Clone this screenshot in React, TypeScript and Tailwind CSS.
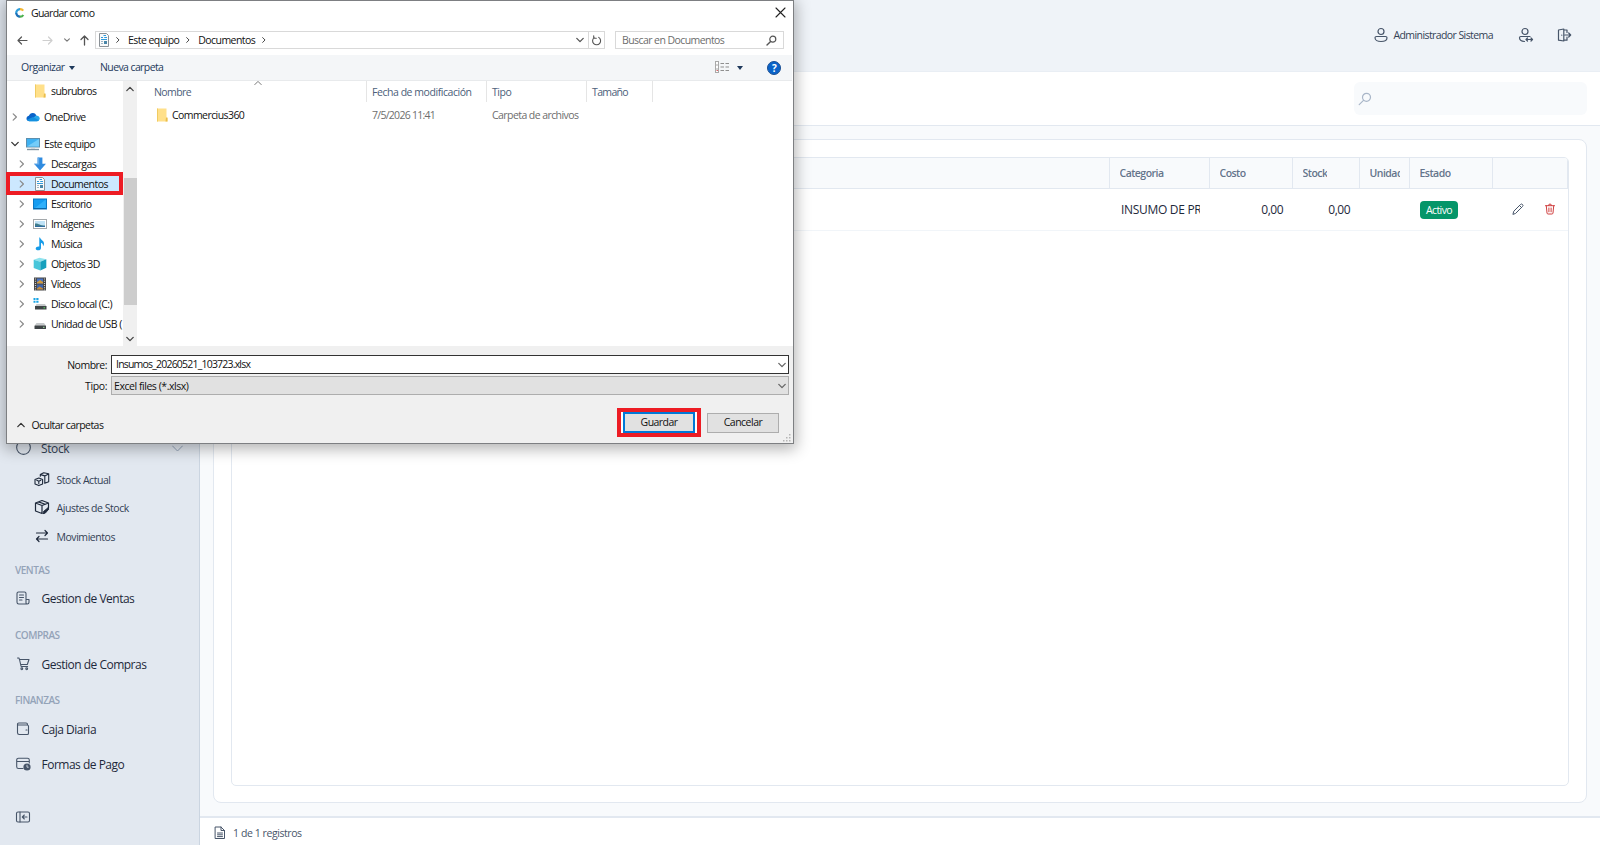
import type { ReactNode } from 'react';
import { clsx } from 'clsx';

interface IconProps {
  className?: string;
  children?: ReactNode;
  size?: number;
  box?: number;
}

// 16 unit stroke icon, shared by the app and the dialog
const Icon = ({ className, children, size = 16, box = 16 }: IconProps) => (
  <svg
    width={size}
    height={size}
    viewBox={`0 0 ${box} ${box}`}
    fill="none"
    stroke="currentColor"
    strokeLinecap="round"
    strokeLinejoin="round"
    className={clsx('shrink-0', className)}
  >
    {children}
  </svg>
);

const ChevronRight = ({ className }: { className?: string }) => (
  <Icon size={8} box={8} className={className}>
    <path d="M2.2 .8 5.4 4 2.2 7.2" strokeWidth="1.2" />
  </Icon>
);

const ChevronDown = ({ className }: { className?: string }) => (
  <Icon size={8} box={8} className={className}>
    <path d="M.8 2.4 4 5.6 7.2 2.4" strokeWidth="1.3" />
  </Icon>
);

const ChevronUp = ({ className }: { className?: string }) => (
  <Icon size={8} box={8} className={className}>
    <path d="M.8 5.6 4 2.4 7.2 5.6" strokeWidth="1.3" />
  </Icon>
);

const FolderIcon = () => (
  <svg width="14" height="14" viewBox="0 0 14 14" className="shrink-0">
    <path d="M2 .5h9.500v9.500h1v3.500H2z" fill="#ffe08a" />
    <path d="M11 9.500h1.500v4H10.500z" fill="#e9bd4c" />
    <path d="M2.500 .5v13" stroke="#f0cb62" />
  </svg>
);

const DocumentIcon = () => (
  <svg width="14" height="14" viewBox="0 0 14 14" className="shrink-0">
    <path d="M2.500 .5h7l2 2v11h-9z" fill="#fafafa" stroke="#8b9196" />
    <path d="M6.500 2.500h2.500M4 4.500h2M7.200 4.500h2.800M4 6.500h6" stroke="#2f9bdc" />
    <path d="M4 8.500h2M4 10.500h2" stroke="#9fb6c6" />
    <rect x="7" y="8" width="3" height="3" fill="#4a86a8" />
  </svg>
);

const treeIcons = {
  folder: <FolderIcon />,
  cloud: (
    <svg width="14" height="14" viewBox="0 0 14 14" className="shrink-0">
      <path d="M3.500 11.200C1.400 11.200 .3 9.800.5 8.200.7 6.800 1.800 6 2.900 5.800 3.500 3.900 5 2.800 6.900 2.900c1.800.1 3 1.200 3.500 2.800z" fill="#0a63c9" />
      <path d="M3.500 11.200 9.900 5.500c2 0 3.800 1 3.800 3.100 0 1.500-1.200 2.600-2.800 2.600z" fill="#28a8ea" />
      <path d="M1 9.800 7 7l6 3.200c-.5.7-1.200 1-2.100 1H3.500C2.300 11.200 1.400 10.700 1 9.800z" fill="#1490df" />
    </svg>
  ),
  pc: (
    <svg width="14" height="14" viewBox="0 0 14 14" className="shrink-0">
      <rect x=".5" y="1.5" width="13" height="8.5" fill="#3fb1f2" stroke="#5c8fae" />
      <path d="M1 9.500 13 2v7.500z" fill="#74ccf9" />
      <path d="M1 12.500h12" stroke="#8093a0" strokeWidth="1.4" />
      <path d="M5 11h4" stroke="#b8c6cf" />
    </svg>
  ),
  download: (
    <svg width="14" height="14" viewBox="0 0 14 14" className="shrink-0">
      <path d="M4.600 .6h4.800v6.200H13L7 13.600 1 6.800h3.600z" fill="#2f8be0" />
      <path d="M4.600 .6h1.600v7H1.800L1 6.800h3.600z" fill="#66abe8" />
    </svg>
  ),
  document: <DocumentIcon />,
  desktop: (
    <svg width="14" height="14" viewBox="0 0 14 14" className="shrink-0">
      <rect x=".5" y="2" width="13" height="10" fill="#159cf0" stroke="#0a78c4" />
      <path d="M2 11 12.800 2.500V11z" fill="#2fb0fa" />
      <path d="M1 11.500h12" stroke="#0a66a8" />
    </svg>
  ),
  image: (
    <svg width="14" height="14" viewBox="0 0 14 14" className="shrink-0">
      <rect x=".5" y="2.5" width="13" height="9" fill="#fff" stroke="#a3a8ab" />
      <rect x="2" y="4" width="10" height="6" fill="#bfe2f6" />
      <path d="M2 6.500c3-.5 5 2 10 2V10H2z" fill="#3f7c8c" />
      <path d="M2 9.200h10v.8H2z" fill="#2b67a5" />
    </svg>
  ),
  music: (
    <svg width="14" height="14" viewBox="0 0 14 14" className="shrink-0">
      <path d="M7 .5c.5 2.500 4.300 3 4 6.500-.1 1-.6 1.800-1 2.200.2-2-.8-3-2-3.400v5.100c0 1.400-1.200 2.400-2.800 2.400S2.600 12.500 2.700 11.400C2.800 10 4.400 9.200 6.300 9.500V.5z" fill="#159be8" />
    </svg>
  ),
  cube: (
    <svg width="14" height="14" viewBox="0 0 14 14" className="shrink-0">
      <path d="M.7 2.800 6.500 .7l6.800 1.600-6 2.400z" fill="#8fe3ee" />
      <path d="M.7 2.800 7.300 4.700v8.700L.7 11z" fill="#48c6da" />
      <path d="M7.300 4.700 13.300 2.300v8.400l-6 2.700z" fill="#16a0bd" />
    </svg>
  ),
  video: (
    <svg width="14" height="14" viewBox="0 0 14 14" className="shrink-0">
      <rect x="1" y=".5" width="12" height="13" fill="#444" />
      <rect x="4" y="1.5" width="6" height="5" fill="#4773c4" />
      <rect x="4" y="7.5" width="6" height="5" fill="#3d64ad" />
      <path d="M4 5.200 7 3l3 2v1.500H4z" fill="#d19a3c" />
      <path d="M4 11.500 6.500 9.500 10 11.500v1H4z" fill="#c78a35" />
      <path d="M2.500 1.500v12M11.500 1.500v12" stroke="#cfcfcf" strokeWidth="1.2" strokeDasharray="1 1.2" />
    </svg>
  ),
  disk: (
    <svg width="14" height="14" viewBox="0 0 14 14" className="shrink-0">
      <path d="M.5 1h2v2h-2zM3.300 1h2.200v2H3.300zM.5 3.700h2v2h-2zM3.300 3.700h2.200v2H3.300z" fill="#19a5e6" />
      <path d="M3.500 7h8.500l1.500 2.500h-11.500z" fill="#c6c9cb" />
      <rect x="2" y="9" width="11.5" height="3.5" fill="#3f4447" />
      <path d="M10.500 10.800h1.500" stroke="#54e05a" />
    </svg>
  ),
  usb: (
    <svg width="14" height="14" viewBox="0 0 14 14" className="shrink-0">
      <path d="M3.500 6h7.500l2 2.800H1.500z" fill="#c6c9cb" />
      <rect x="1.5" y="8.5" width="11.5" height="3.5" rx=".6" fill="#3f4447" />
      <path d="M10 10.300h1.500" stroke="#9fe0a0" />
    </svg>
  ),
};

interface TreeItem {
  label: string;
  icon: keyof typeof treeIcons;
  level: 'root' | 'child';
  arrow?: 'right' | 'down';
  className?: string;
  selected?: boolean;
}

const treeItems: TreeItem[] = [
  { label: 'subrubros', icon: 'folder', level: 'child', className: 'mb-[6px]' },
  { label: 'OneDrive', icon: 'cloud', level: 'root', arrow: 'right', className: 'mb-[7px]' },
  { label: 'Este equipo', icon: 'pc', level: 'root', arrow: 'down' },
  { label: 'Descargas', icon: 'download', level: 'child', arrow: 'right' },
  { label: 'Documentos', icon: 'document', level: 'child', arrow: 'right', selected: true },
  { label: 'Escritorio', icon: 'desktop', level: 'child', arrow: 'right' },
  { label: 'Imágenes', icon: 'image', level: 'child', arrow: 'right' },
  { label: 'Música', icon: 'music', level: 'child', arrow: 'right' },
  { label: 'Objetos 3D', icon: 'cube', level: 'child', arrow: 'right' },
  { label: 'Vídeos', icon: 'video', level: 'child', arrow: 'right' },
  { label: 'Disco local (C:)', icon: 'disk', level: 'child', arrow: 'right' },
  { label: 'Unidad de USB (', icon: 'usb', level: 'child', arrow: 'right' },
];

const TreeRow = ({ item }: { item: TreeItem }) => (
  <div
    className={clsx(
      'relative flex h-5 shrink-0 items-center whitespace-nowrap',
      item.level === 'child' ? 'pl-[11px]' : 'pl-1',
      item.selected && 'bg-[#cce8ff]',
      item.className
    )}
  >
    <span className="flex w-[15px] shrink-0 text-[#8a8a8a]">
      {item.arrow === 'right' && <ChevronRight />}
      {item.arrow === 'down' && <ChevronDown className="text-[#333]" />}
    </span>
    {treeIcons[item.icon]}
    <span className="ml-1">{item.label}</span>
    {/* Highlight frame around the target folder */}
    {item.selected && (
      <div className="absolute -left-[1px] -top-[2px] h-[23px] w-[117px] border-4 border-[#ed1c24]" />
    )}
  </div>
);

const SaveDialog = () => (
  <div className="absolute left-1.5 top-0 flex h-[444px] w-[788px] flex-col border border-[#7d7f82] bg-white text-[10.5px] tracking-[-0.57px] text-[#111] shadow-[0_3px_14px_2px_rgba(0,0,0,0.3)]">
    {/* Title bar */}
    <div className="flex h-[23px] shrink-0 items-center pl-2 pr-[7px]">
      <svg width="10" height="10" viewBox="0 0 10 10" fill="none" strokeWidth="2.2">
        <path d="M8.200 2.700A3.700 3.700 0 0 0 4.500 1.300" stroke="#f2b632" />
        <path d="M5 1.200A3.700 3.700 0 0 0 1.300 5.500" stroke="#2c9ddb" />
        <path d="M1.300 5A3.700 3.700 0 0 0 5 8.700" stroke="#1c70b8" />
        <path d="M4.800 8.700A3.700 3.700 0 0 0 8.300 7" stroke="#4bb04f" />
      </svg>
      <span className="ml-[6px] mt-[2px] flex-1 tracking-[-0.62px]">Guardar como</span>
      <Icon size={11} box={11} className="text-[#222]">
        <path d="M1 1l9 9M10 1l-9 9" strokeWidth="1.1" />
      </Icon>
    </div>

    {/* Navigation */}
    <div className="mb-[2px] flex h-[29px] shrink-0 items-center pl-[9px]">
      <Icon size={13} box={13} className="mt-[3px] text-[#555]">
        <path d="M11 6.500H2M5.500 3 2 6.500 5.500 10" strokeWidth="1.2" />
      </Icon>
      <Icon size={13} box={13} className="ml-3 mt-[3px] text-[#cfcfcf]">
        <path d="M2 6.500h9M7.500 3 11 6.500 7.500 10" strokeWidth="1.2" />
      </Icon>
      <Icon size={6} box={8} className="ml-[10px] mt-[2px] text-[#777]">
        <path d="M.8 2.400 4 5.600 7.200 2.400" strokeWidth="1.5" />
      </Icon>
      <Icon size={13} box={13} className="ml-[8px] mt-[3px] text-[#555]">
        <path d="M6.500 11V2M3 5.500 6.500 2 10 5.500" strokeWidth="1.3" />
      </Icon>
      <div className="ml-[4px] mt-[3px] flex h-[18px] w-[510px] items-center border border-[#d9d9d9] pl-[1px]">
        <DocumentIcon />
        <ChevronRight className="ml-[3px] scale-75 text-[#333]" />
        <span className="ml-[6px] tracking-[-0.55px]">Este equipo</span>
        <ChevronRight className="ml-[5px] scale-75 text-[#333]" />
        <span className="ml-[6px]">Documentos</span>
        <ChevronRight className="ml-[5px] scale-75 text-[#333]" />
        <ChevronDown className="ml-auto mr-[4px] text-[#555]" />
        <div className="flex h-full w-4 items-center justify-center border-l border-[#d9d9d9]">
          <Icon size={11} box={11} className="text-[#555]">
            <path d="M3.200 2.600A4 4 0 1 0 7.700 2.400M2.700 .7v2.500h2.600" strokeWidth="1.1" />
          </Icon>
        </div>
      </div>
      <div className="ml-[10px] mt-[3px] flex h-[18px] w-[169px] items-center justify-between border border-[#d9d9d9] pl-[6px] pr-[6px] text-[#6d6d6d]">
        <span>Buscar en Documentos</span>
        <Icon size={11} box={11} className="text-[#555]">
          <circle cx="6.8" cy="4.2" r="3" strokeWidth="1.2" />
          <path d="M4.600 6.400 1 10" strokeWidth="1.4" />
        </Icon>
      </div>
    </div>

    {/* Commands */}
    <div className="mr-px flex h-[26px] shrink-0 items-center border-b border-[#e8eaec] bg-[#f4f6f8] pl-[14px] pr-[11px] text-[#1e395b]">
      <span className="w-[43px] tracking-[-0.5px]">Organizar</span>
      <span className="ml-[5px] border-x-[3.5px] border-t-4 border-x-transparent border-t-[#1e395b]" />
      <span className="ml-[25px] tracking-[-0.6px]">Nueva carpeta</span>
      <svg width="14" height="12" viewBox="0 0 14 12" className="mb-px ml-auto">
        <rect x=".5" y=".5" width="3" height="11" fill="#fff" stroke="#a9a9a9" />
        <path d="M1 4h3M1 8h3" stroke="#a9a9a9" />
        <path d="M1.500 9.500h1.500" stroke="#d66" />
        <path d="M5.500 2.500h3.500M10.500 2.500H14M5.500 6h3.500M10.500 6H14M5.500 9.500h3.500M10.500 9.500H14" stroke="#8f8f8f" />
      </svg>
      <span className="ml-[8px] border-x-[3.5px] border-t-4 border-x-transparent border-t-[#1e395b]" />
      <span className="ml-[24px] flex size-[14px] items-center justify-center rounded-full border border-[#1b4f93] bg-[#0a63c9] text-[10px] font-bold text-white">
        ?
      </span>
    </div>

    {/* Folder tree and file list */}
    <div className="flex h-[265px] shrink-0">
      <div className="flex w-[116px] flex-col">
        {treeItems.map((item) => (
          <TreeRow key={item.label} item={item} />
        ))}
      </div>
      <div className="flex w-[14px] flex-col items-center bg-[#f0f0f0] text-[#444]">
        <ChevronUp className="mr-px mt-1" />
        <div className="mt-[85px] h-[127px] w-[13px] bg-[#cdcdcd]" />
        <ChevronDown className="mb-[3px] mr-px mt-auto" />
      </div>
      <div className="flex-1 whitespace-nowrap">
        <div className="relative flex h-[21px] items-center tracking-[-0.45px] text-[#4c607a]">
          <div className="flex h-full w-[230px] items-center border-r border-[#e5e5e5] pl-[17px] pt-px tracking-[-0.6px]">Nombre</div>
          <div className="flex h-full w-[120px] items-center border-r border-[#e5e5e5] pl-[5px] pt-px">Fecha de modificación</div>
          <div className="flex h-full w-[100px] items-center border-r border-[#e5e5e5] pl-[5px] pt-px">Tipo</div>
          <div className="flex h-full w-[66px] items-center border-r border-[#e5e5e5] pl-[5px] pt-px tracking-[-0.65px]">Tamaño</div>
          <Icon size={8} box={8} className="absolute left-[117px] top-[-2px] text-[#777]">
            <path d="M.8 5.600 4 2.400 7.200 5.600" strokeWidth="1" />
          </Icon>
        </div>
        <div className="mt-[3px] flex h-5 items-center text-[#6d6d6d]">
          <div className="flex w-[230px] items-center pl-[17.5px] text-[#111]">
            <FolderIcon />
            <span className="ml-[3.5px] mt-px">Commercius360</span>
          </div>
          <div className="mt-px w-[120px] pl-[5px] tracking-[-0.72px]">7/5/2026 11:41</div>
          <div className="mt-px pl-[5px] tracking-[-0.57px]">Carpeta de archivos</div>
        </div>
      </div>
    </div>

    {/* File name, type and actions */}
    <div className="relative flex flex-1 flex-col bg-[#f0f0f0] pr-[4px] pt-[9px]">
      <div className="flex h-[19px] items-center">
        <span className="mt-px w-[104px] pr-[4px] text-right tracking-[-0.5px]">Nombre:</span>
        <div className="flex h-full flex-1 items-center justify-between border border-[#333] bg-white pl-[4px] pr-[2px]">
          <span className="mb-px tracking-[-0.8px]">Insumos_20260521_103723.xlsx</span>
          <ChevronDown className="text-[#666]" />
        </div>
      </div>
      <div className="mt-[2px] flex h-[19px] items-center">
        <span className="mt-px w-[104px] pr-[4px] text-right tracking-[-0.4px]">Tipo:</span>
        <div className="flex h-full flex-1 items-center justify-between border border-[#adadad] bg-[#e1e1e1] pl-[2px] pr-[2px]">
          <span className="mt-px tracking-[-0.45px]">Excel files (*.xlsx)</span>
          <ChevronDown className="text-[#666]" />
        </div>
      </div>
      <div className="mt-[13px] flex h-[29px] items-center pl-[10px] pr-[10px]">
        <ChevronUp className="mt-1 text-[#333]" />
        <span className="ml-[6.5px] mt-[5px] flex-1">Ocultar carpetas</span>
        <div className="flex h-[29px] w-[84px] items-center justify-center border-4 border-[#ed1c24] bg-white">
          <button className="h-full w-[72px] border-2 border-[#0078d7] bg-[#e1e1e1] pb-px tracking-[-0.55px]">Guardar</button>
        </div>
        <button className="ml-[6px] h-[20px] w-[72px] border border-[#adadad] bg-[#e1e1e1] pb-px tracking-[-0.5px]">Cancelar</button>
      </div>
      <svg width="8" height="8" viewBox="0 0 8 8" fill="#b5b5b5" className="absolute bottom-px right-[2px]">
        <path d="M6 0h1.500v1.500H6zM3 3h1.500v1.500H3zM6 3h1.500v1.500H6zM0 6h1.500v1.500H0zM3 6h1.500v1.500H3zM6 6h1.500v1.500H6z" />
      </svg>
    </div>
  </div>
);

const SectionLabel = ({ children }: { children: ReactNode }) => (
  <div className="mt-[9px] flex h-5 shrink-0 items-center pl-[15px] text-[10px] font-semibold tracking-[-0.5px] text-[#94a3b8]">
    {children}
  </div>
);

const NavRow = ({ icon, label, className }: { icon: ReactNode; label: string; className?: string }) => (
  <div className={clsx('flex h-[34px] shrink-0 items-center pl-[15px] text-[12px] tracking-[-0.5px] text-[#1e293b]', className)}>
    <Icon className="mb-px text-[#475569]">{icon}</Icon>
    <span className="ml-[10.5px] mt-px">{label}</span>
  </div>
);

const SubRow = ({ icon, label }: { icon: ReactNode; label: string }) => (
  <div className="flex h-[28.5px] shrink-0 items-center pl-[34px] text-[10.5px] tracking-[-0.45px] text-[#334155]">
    <Icon className="mb-px text-[#1e293b]">{icon}</Icon>
    <span className="ml-[6.5px] mt-px">{label}</span>
  </div>
);

const Sidebar = () => (
  <aside className="flex w-[200px] shrink-0 flex-col border-r border-[#cbd5e1] bg-[#e2e8f0] pt-[431px]">
    <div className="flex h-[34px] shrink-0 items-center pl-4 pr-[16px] text-[12px] tracking-[-0.4px] text-[#334155]">
      <Icon size={15} box={14} className="-mt-px text-[#475569]">
        <circle cx="7" cy="7" r="6.4" />
      </Icon>
      <span className="ml-[10px] mt-[2px] flex-1">Stock</span>
      <Icon size={11} box={11} className="text-[#94a3b8]">
        <path d="M.6 3 5.500 8l4.900-5" />
      </Icon>
    </div>
    <SubRow
      label="Stock Actual"
      icon={
        <>
          <path d="M1 8.600 4.800 7 8.600 8.600v4.300l-3.800 1.700L1 12.900zM2.800 9.200l2 1 2-1M4.800 10.200v2.200" strokeWidth="1.1" />
          <path d="M6.300 5.200V3.600l3.400-1.800 5 .9v8L10.700 12.300M6.600 3.600l4.200 1.300 3.700-2M10.800 5v7" strokeWidth="1.1" />
        </>
      }
    />
    <SubRow
      label="Ajustes de Stock"
      icon={
        <>
          <path d="M1.500 4 8 1.500 14.500 4v5M1.500 4v8L8 14.500V6.500L1.500 4M8 6.500 14.500 4M4.500 2.900 11.200 5.300" strokeWidth="1.2" />
          <path d="M9.800 12.300 14 8.800l.8 1.300-3.500 4-2 .5z" fill="currentColor" />
        </>
      }
    />
    <SubRow
      label="Movimientos"
      icon={
        <path d="M2.500 5h11M11 2.500 13.500 5 11 7.500M13.500 11h-11M5 8.500 2.500 11 5 13.500" strokeWidth="1.2" />
      }
    />

    <SectionLabel>VENTAS</SectionLabel>
    <NavRow
      className="mt-[2px]"
      label="Gestion de Ventas"
      icon={
        <path d="M11 9.500V3.500a1.500 1.500 0 0 0-1.500-1.500h-6A1.500 1.500 0 0 0 2 3.500v8.800A1.700 1.700 0 0 0 3.700 14H12.300A1.700 1.700 0 0 0 14 12.300V9.500h-3v3.200a1.300 1.300 0 0 0 1.300 1.300M4.500 5h4M4.500 7.500h4M4.500 10h2.500" strokeWidth="1.1" />
      }
    />
    <SectionLabel>COMPRAS</SectionLabel>
    <NavRow
      className="mt-[2.5px]"
      label="Gestion de Compras"
      icon={
        <>
          <path d="M2.500 2h1.400l.6 1.500 1.600 7h6.500M4.500 3.500h9.500l-1.700 5H5.700" strokeWidth="1.1" />
          <circle cx="6.8" cy="12.8" r=".9" strokeWidth="1.1" />
          <circle cx="11.7" cy="12.8" r=".9" strokeWidth="1.1" />
        </>
      }
    />
    <SectionLabel>FINANZAS</SectionLabel>
    <NavRow
      className="mt-[2.5px]"
      label="Caja Diaria"
      icon={
        <path d="M12.500 4V3.500A1.500 1.500 0 0 0 11 2H3.700A1.200 1.200 0 0 0 2.500 3.200v8.600A1.700 1.700 0 0 0 4.200 13.500h8a1.300 1.300 0 0 0 1.300-1.300V5.300A1.300 1.300 0 0 0 12.200 4H3.700A1 1 0 0 1 2.500 3.200M11 9h1" strokeWidth="1.1" />
      }
    />
    <NavRow
      className="mt-px"
      label="Formas de Pago"
      icon={
        <>
          <path d="M8 12.500H3.500A1.800 1.800 0 0 1 1.700 10.700V4A1.800 1.800 0 0 1 3.500 2.200h9A1.800 1.800 0 0 1 14.300 4v3M1.700 5.500h12.600" strokeWidth="1.1" />
          <circle cx="12" cy="11" r="3.6" fill="currentColor" stroke="none" />
          <path d="M12 9.200v2h1.300" stroke="#e2e8f0" strokeWidth=".8" />
        </>
      }
    />
    <div className="mt-auto flex h-[57px] items-center pl-[15px] text-[#475569]">
      <Icon>
        <rect x="1.5" y="3" width="13" height="10" rx="1.5" strokeWidth="1.1" />
        <path d="M5 3v10M12 8H7.500M9.300 6 7.300 8l2 2" strokeWidth="1.1" />
      </Icon>
    </div>
  </aside>
);

const HeadCell = ({ className, children }: { className: string; children?: ReactNode }) => (
  <div className={clsx('flex items-center overflow-hidden border-r border-[#e2e8f0] px-[9.5px]', className)}>
    <span className="overflow-hidden whitespace-nowrap leading-4">{children}</span>
  </div>
);

const Main = () => (
  <main className="flex min-w-0 flex-1 flex-col bg-[#f8fafc]">
    <header className="flex h-[72px] shrink-0 items-center justify-end border-b border-[#e9eef4] bg-[#eff3f8] pb-px pr-[28px] text-[10.5px] text-[#475569]">
      <Icon className="text-[#475569]">
        <circle cx="8" cy="4.5" r="3" strokeWidth="1.2" />
        <path d="M3.500 9.500h9c.9 0 1.500.5 1.500 1.200 0 2.300-2.500 3.800-6 3.800s-6-1.500-6-3.800c0-.7.6-1.200 1.500-1.200z" strokeWidth="1.2" />
      </Icon>
      <span className="ml-[4px] mt-px tracking-[-0.58px] text-[#334155]">Administrador Sistema</span>
      <Icon className="ml-[25px]">
        <circle cx="7" cy="4.5" r="3" strokeWidth="1.2" />
        <path d="M12 9.500H2.800c-.8 0-1.300.5-1.300 1.300 0 2.200 2 3.500 5 3.700M8 12.500h6.500M9.500 11 8 12.500 9.500 14M13 11l1.500 1.500L13 14" strokeWidth="1.2" />
      </Icon>
      <Icon className="ml-[22px]">
        <path d="M7.800 2 2.500 3v10.200L7.800 14zM8 3h3v2.500M8 13.200h3v-3M5.800 8v.2M9 8h5.500M12.700 6 14.700 8l-2 2" strokeWidth="1.2" />
      </Icon>
    </header>

    <div className="flex h-[54px] shrink-0 items-center justify-end border-b border-[#e2e8f0] bg-white pr-[13px]">
      <div className="flex h-[33px] w-[233px] items-center rounded-md bg-[#f8fafc] pl-[4px] text-[#a9b6c8]">
        <Icon size={14} box={14}>
          <circle cx="8.5" cy="5.3" r="4" strokeWidth="1.2" />
          <path d="M5.500 8.300 1.200 12.600" strokeWidth="1.2" />
        </Icon>
      </div>
    </div>

    <section className="mx-[13px] mb-[13px] mt-[13px] flex min-h-0 flex-1 rounded-lg border border-[#e2e8f0] bg-white p-[17px] pb-[16px]">
      <div className="flex flex-1 flex-col overflow-hidden rounded-[5px] border border-[#e2e8f0]">
        <div className="flex h-[31px] shrink-0 border-b border-[#e2e8f0] bg-[#f8fafc] text-[10.5px] font-semibold tracking-[-0.52px] text-[#64748b]">
          <HeadCell className="flex-1" />
          <HeadCell className="w-[100px]">Categoria</HeadCell>
          <HeadCell className="w-[83px]">Costo</HeadCell>
          <HeadCell className="w-[67px]">Stock</HeadCell>
          <HeadCell className="w-[50px]">Unidad</HeadCell>
          <HeadCell className="w-[83px]">Estado</HeadCell>
          <HeadCell className="w-[75px]" />
        </div>
        <div className="flex h-[42px] shrink-0 items-center border-b border-[#f1f5f9] text-[12px] text-[#1e293b]">
          <div className="flex-1" />
          <div className="w-[100px] pl-[11px] pr-[10px]">
            <div className="overflow-hidden whitespace-nowrap leading-4 tracking-[-0.3px]">INSUMO DE PR</div>
          </div>
          <div className="w-[83px] pr-[10px] text-right leading-4 tracking-[-0.5px]">0,00</div>
          <div className="w-[67px] pr-[10px] text-right leading-4 tracking-[-0.5px]">0,00</div>
          <div className="w-[50px]" />
          <div className="w-[83px] pl-[10px]">
            <div className="flex h-[18px] w-[38px] items-center justify-center rounded bg-[#059669] pt-px text-[10.5px] tracking-[-0.6px] text-white">
              Activo
            </div>
          </div>
          <div className="flex w-[75px] items-center pl-[19px]">
            <Icon size={12} box={12} className="mb-px text-[#475569]">
              <path d="M1 11 1.800 8.200 8.500 1.500a1.400 1.400 0 0 1 2 2L3.800 10.200zM7.500 2.500l2 2" />
            </Icon>
            <Icon size={12} box={12} className="mb-px ml-[20px] text-[#cf3f3f]">
              <path d="M1.500 2.700h9M4.500 2.500a1.500 1.500 0 0 1 3 0M2.300 2.900 3 10a1.100 1.100 0 0 0 1.100 1h3.800A1.100 1.100 0 0 0 9 10l.7-7.100M4.900 5v3.800M7.100 5v3.800" />
            </Icon>
          </div>
        </div>
      </div>
    </section>

    <footer className="flex h-[29px] shrink-0 items-center border-t-2 border-[#e2e8f0] bg-white pl-[13px] pt-[2px] text-[10.5px] tracking-[-0.42px] text-[#475569]">
      <Icon size={14} box={14}>
        <path d="M2.500 1h5.500l3.500 3.500V12.500H2.500zM8 1v3.500h3.500M4.500 7h5M4.500 8.800h5M4.500 10.600h5" />
      </Icon>
      <span className="ml-[6px] mt-px">1 de 1 registros</span>
    </footer>
  </main>
);

const App = () => (
  <div className="relative flex h-[845px] w-[1600px] overflow-hidden font-['Open_Sans','Noto_Sans',sans-serif] leading-none">
    <Sidebar />
    <Main />
    <SaveDialog />
  </div>
);

export default App;
